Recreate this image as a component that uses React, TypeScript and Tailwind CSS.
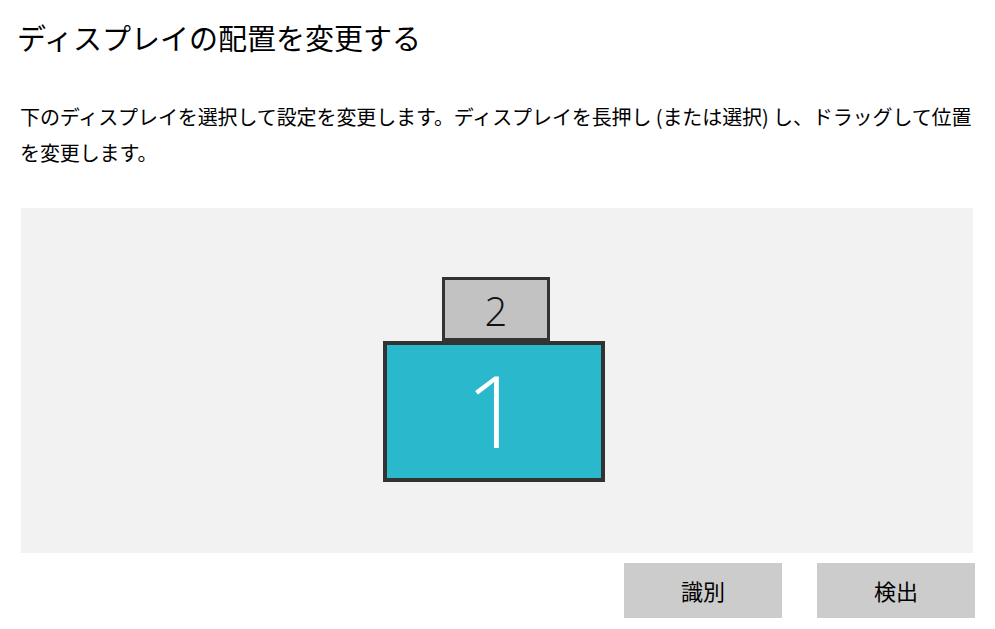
export default function App() {
  const jp = { fontFamily: '"Noto Sans CJK JP", "Noto Sans", sans-serif' };
  const num = { fontFamily: '"Open Sans", "Noto Sans", sans-serif' };
  return (
    <div className="w-[995px] h-[629px] bg-white text-black overflow-hidden" style={jp}>
      <div className="pl-[17px] pt-[15px]">
        <h1 className="text-[29px] leading-[44px] font-normal">ディスプレイの配置を変更する</h1>
      </div>
      <p className="pl-[20px] mt-[40px] text-[20px] leading-[36px] tracking-[-0.1px] whitespace-nowrap">
        下のディスプレイを選択して設定を変更します。ディスプレイを長押し (または選択) し、ドラッグして位置
        <br />
        を変更します。
      </p>
      <div className="ml-[21px] mt-[37px] w-[952px] h-[345px] bg-[#f2f2f2] flex items-center justify-center">
        <div className="mr-[6px] mb-[2px] flex flex-col items-center">
          <div className="ml-[4px] w-[108px] h-[64px] border-[3px] border-[#333333] bg-[#c2c2c2] flex items-center justify-center pt-[3px]">
            <span className="text-[40px] font-light leading-[36px] text-[#111]" style={num}>2</span>
          </div>
          <div className="w-[222px] h-[141px] border-[4px] border-[#333333] bg-[#29b8cc] flex items-center justify-center pb-[6px]">
            <span className="text-[100px] font-light leading-[80px] text-white" style={num}>1</span>
          </div>
        </div>
      </div>
      <div className="mt-[10px] flex justify-end gap-[35px] pr-[20px]">
        <button className="w-[158px] h-[55px] bg-[#cccccc] text-[22px] flex items-center justify-center">識別</button>
        <button className="w-[158px] h-[55px] bg-[#cccccc] text-[22px] flex items-center justify-center">検出</button>
      </div>
    </div>
  );
}
